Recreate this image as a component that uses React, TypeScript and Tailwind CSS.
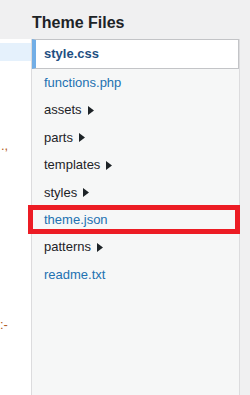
const files: { name: string; folder?: boolean }[] = [
  { name: "functions.php" },
  { name: "assets", folder: true },
  { name: "parts", folder: true },
  { name: "templates", folder: true },
  { name: "styles", folder: true },
  { name: "theme.json" },
  { name: "patterns", folder: true },
  { name: "readme.txt" },
];

function Caret() {
  return (
    <svg width="6" height="9" viewBox="0 0 6 9" className="ml-[6px] mt-[1px]">
      <path d="M0 0 L6 4.5 L0 9 Z" fill="#1d2327" />
    </svg>
  );
}

export default function App() {
  return (
    <div
      className="w-[250px] h-[395px] bg-[#f0f0f1] overflow-hidden flex flex-col"
      style={{ fontFamily: '"Liberation Sans", Arial, sans-serif' }}
    >
      <div className="h-[39px] shrink-0 flex">
        <div className="w-[32px]" />
        <h2 className="text-[16px] font-bold text-[#1d2327] leading-none pt-[15px]">Theme Files</h2>
      </div>
      <div className="flex flex-1">
        {/* cut-off editor */}
        <div className="w-[32px] bg-white border-r border-[#dcdcde] relative overflow-hidden text-[13px] text-[#b35c1e]">
          <div className="mt-[4px] h-[18px] bg-[#e5f1fc]" />
          <div className="absolute left-[1px] top-[100px] leading-none">.,</div>
          <div className="absolute left-[0px] top-[279px] leading-none">:-</div>
        </div>
        {/* file list */}
        <ul className="w-[208px] bg-[#f6f7f7] border-r border-[#dcdcde] text-[13px]">
          <li className="h-[30px] bg-white border border-[#c3c4c7] border-l-[4px] border-l-[#72aee6] flex items-center pl-[8px]">
            <span className="text-[#1e4f82] font-semibold">style.css</span>
          </li>
          {files.map((f) => (
            <li key={f.name} className="relative h-[27.4px] flex items-center pl-[12px]">
              {f.folder ? (
                <span className="flex items-center text-[#1d2327]">
                  {f.name}
                  <Caret />
                </span>
              ) : (
                <span className="text-[#2271b1]">{f.name}</span>
              )}
              {f.name === "theme.json" && (
                <span className="absolute left-[-4px] right-[-1px] top-[-1px] bottom-[-1px] border-[5px] border-[#ec1c24]" />
              )}
            </li>
          ))}
        </ul>
      </div>
    </div>
  );
}
